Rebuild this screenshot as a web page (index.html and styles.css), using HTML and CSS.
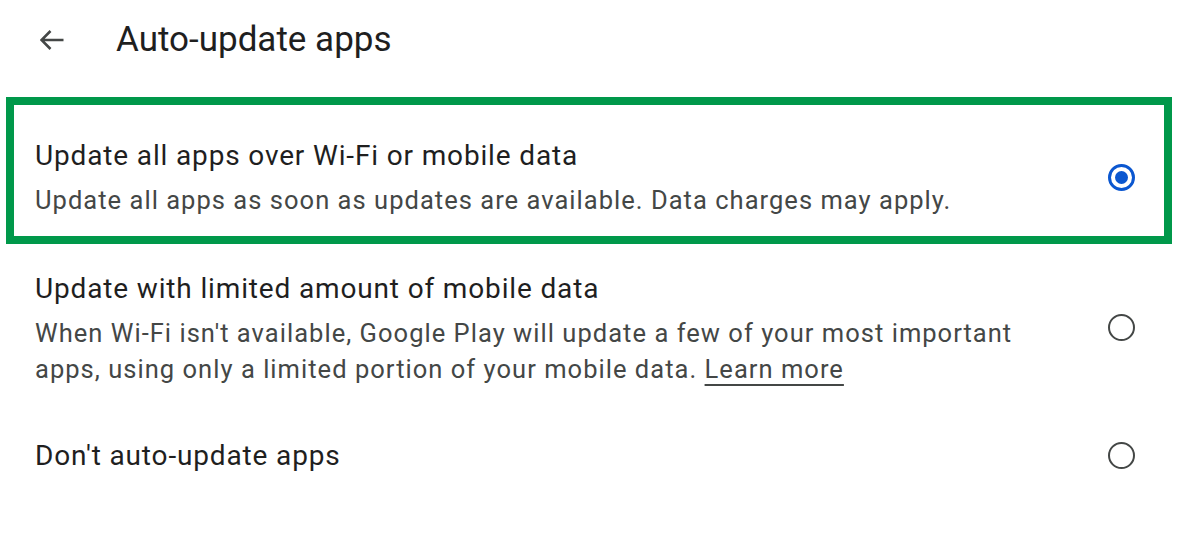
FILE: index.html
```html
<!DOCTYPE html>
<html lang="en">
<head>
<meta charset="utf-8">
<title>Auto-update apps</title>
<link rel="stylesheet" href="styles.css">
</head>
<body>
<div class="screen">
  <header class="topbar">
    <svg class="back" width="24" height="20" viewBox="0 0 24 20" aria-hidden="true">
      <path d="M1.5 10H23.5M10.5 1L1.5 10L10.5 19" fill="none" stroke="#444746" stroke-width="2.6" stroke-linecap="butt" stroke-linejoin="miter"/>
    </svg>
    <h1 class="title">Auto-update apps</h1>
  </header>
  <div class="options">
    <div class="option option-first selected">
      <div class="text">
        <div class="label">Update all apps over Wi-Fi or mobile data</div>
        <div class="desc">Update all apps as soon as updates are available. Data charges may apply.</div>
      </div>
      <span class="radio on"></span>
    </div>
    <div class="option option-second">
      <div class="text">
        <div class="label">Update with limited amount of mobile data</div>
        <div class="desc">When Wi-Fi isn't available, Google Play will update a few of your most important apps, using only a limited portion of your mobile data. <a class="link" href="#">Learn more</a></div>
      </div>
      <span class="radio"></span>
    </div>
    <div class="option option-third">
      <div class="text">
        <div class="label">Don't auto-update apps</div>
      </div>
      <span class="radio"></span>
    </div>
  </div>
</div>
</body>
</html>
```

FILE: styles.css
```css
html, body {
  margin: 0;
  padding: 0;
  background: #ffffff;
}

body {
  font-family: Roboto, "Noto Sans", "Liberation Sans", sans-serif;
  color: #1f1f1f;
}

.screen {
  width: 1180px;
  height: 536px;
  overflow: hidden;
}

.topbar {
  display: flex;
  align-items: center;
  height: 97px;
  box-sizing: border-box;
  padding: 18px 0 35px 40px;
}

.back {
  flex: none;
  display: block;
}

.title {
  margin: 0 0 0 52px;
  font-size: 35px;
  font-weight: 400;
  line-height: 44px;
  color: #1f1f1f;
}

.options {
  display: flex;
  flex-direction: column;
  padding: 0 8px 0 6px;
}

.option {
  display: flex;
  align-items: center;
  border: 8px solid transparent;
  padding: 0 29px 0 21px;
}

.option.selected {
  border-color: #00984a;
}

.option-first {
  padding-top: 33px;
  padding-bottom: 18px;
}

.option-second {
  border-top-width: 0;
  padding-top: 27px;
  padding-bottom: 16px;
}

.option-third {
  padding-top: 19px;
}

.text {
  flex: 1;
  min-width: 0;
}

.label {
  font-size: 28px;
  line-height: 36px;
  letter-spacing: 0.85px;
  color: #1f1f1f;
}

.desc {
  margin-top: 8px;
  font-size: 25.5px;
  line-height: 36px;
  letter-spacing: 1.03px;
  color: #444746;
  padding-right: 20px;
}

.link {
  color: #444746;
  text-decoration: underline;
  text-underline-offset: 6px;
  text-decoration-thickness: 1.5px;
}

.radio {
  flex: none;
  width: 27px;
  height: 27px;
  box-sizing: border-box;
  border: 2.5px solid #444746;
  border-radius: 50%;
  margin: 0 0 2px 40px;
  position: relative;
}

.option-second .radio {
  margin-bottom: 4px;
}

.radio.on {
  border: 3px solid #0b57d0;
}

.radio.on::after {
  content: "";
  position: absolute;
  left: 50%;
  top: 50%;
  width: 13px;
  height: 13px;
  margin: -6.5px 0 0 -6.5px;
  border-radius: 50%;
  background: #0b57d0;
}
```
